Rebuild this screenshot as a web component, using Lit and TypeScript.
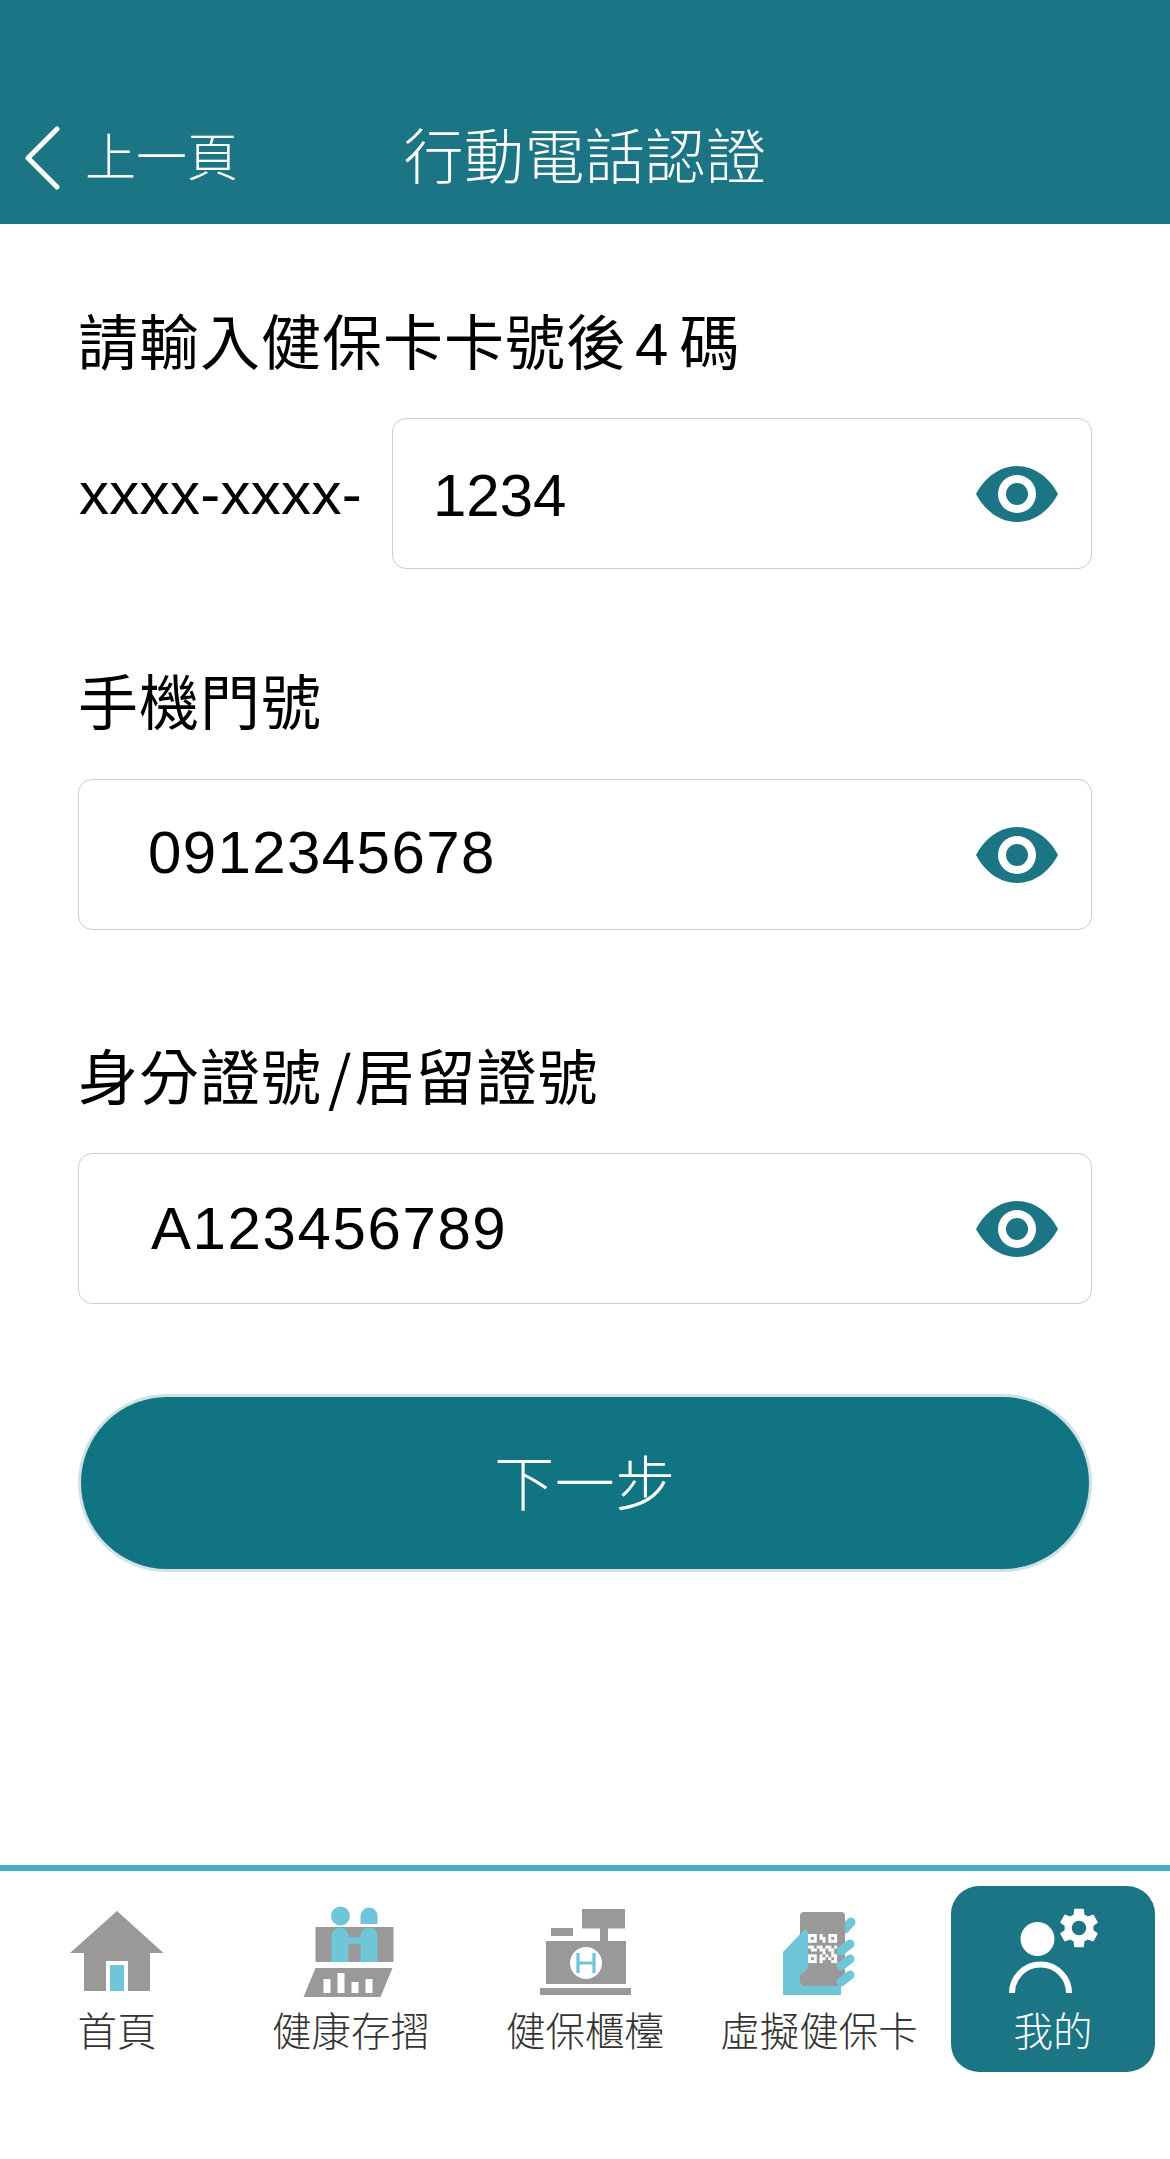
import { LitElement, html, css, svg } from "lit";
import { customElement } from "lit/decorators.js";

const GEAR = "M19.14 12.94c.04-.3.06-.61.06-.94 0-.32-.02-.64-.07-.94l2.03-1.58a.49.49 0 0 0 .12-.61l-1.92-3.32a.488.488 0 0 0-.59-.22l-2.39.96c-.5-.38-1.03-.7-1.62-.94l-.36-2.54a.484.484 0 0 0-.48-.41h-3.84c-.24 0-.43.17-.47.41l-.36 2.54c-.59.24-1.13.57-1.62.94l-2.39-.96c-.22-.08-.47 0-.59.22L2.74 8.87c-.12.21-.08.47.12.61l2.03 1.58c-.05.3-.09.63-.09.94s.02.64.07.94l-2.03 1.58a.49.49 0 0 0-.12.61l1.92 3.32c.12.22.37.29.59.22l2.39-.96c.5.38 1.03.7 1.62.94l.36 2.54c.05.24.24.41.48.41h3.84c.24 0 .44-.17.47-.41l.36-2.54c.59-.24 1.13-.56 1.62-.94l2.39.96c.22.08.47 0 .59-.22l1.92-3.32c.12-.22.07-.47-.12-.61l-2.01-1.58zM12 15.6c-1.98 0-3.6-1.62-3.6-3.6s1.62-3.6 3.6-3.6 3.6 1.62 3.6 3.6-1.62 3.6-3.6 3.6z";

const QR = [
  "1110100111",
  "1010110101",
  "1110010111",
  "0000000000",
  "1101101101",
  "0110110110",
  "0000010010",
  "1110101011",
  "1010110101",
  "1110100011",
];

const GRAY = "#999";
const BLUE = "#6ec6d8";

const homeIcon = svg`
  <path d="M117 1911 L163.5 1953 H150 V1991 H84 V1953 H70 Z" fill=${GRAY} />
  <rect x="106" y="1961" width="22" height="30" fill="#fff" />
  <rect x="110" y="1965" width="14" height="26" fill=${BLUE} />`;

const healthIcon = svg`
  <circle cx="339.5" cy="1916" r="9.5" fill=${BLUE} />
  <path d="M359.5 1924 V1916 a8.5 8.5 0 0 1 17 0 V1924 Z" fill=${BLUE} />
  <rect x="314.5" y="1927" width="78" height="35" fill=${GRAY} />
  <path d="M330.5 1962 V1936 a8.5 8.5 0 0 1 17 0 V1937 H359.5 V1936 a8.5 8.5 0 0 1 17 0 V1962 H359.5 V1944 H347.5 V1962 Z" fill=${BLUE} />
  <path d="M314.5 1968 H391.5 L379.5 1997 H302.5 Z" fill=${GRAY} />
  <rect x="322.5" y="1979" width="7" height="14" fill="#fff" />
  <rect x="336.5" y="1973" width="7" height="20" fill="#fff" />
  <rect x="350.5" y="1982" width="7" height="11" fill="#fff" />
  <rect x="364.5" y="1979" width="7" height="14" fill="#fff" />`;

const registerIcon = svg`
  <rect x="582" y="1909" width="43" height="19.5" fill=${GRAY} />
  <rect x="551" y="1928" width="22" height="8" fill=${GRAY} />
  <rect x="600" y="1928" width="8" height="14" fill=${GRAY} />
  <rect x="546" y="1941" width="80" height="43" fill=${GRAY} />
  <rect x="540" y="1988" width="91" height="7" fill=${GRAY} />
  <circle cx="586" cy="1963" r="16" fill="#fff" />
  <path d="M578 1953 V1973 M594 1953 V1973 M578 1963 H594" stroke=${BLUE} stroke-width="3.2" fill="none" />`;

const cardIcon = svg`
  <path d="M845 1929 L851 1922" stroke=${BLUE} stroke-width="9" stroke-linecap="round" />
  <rect x="800" y="1912" width="45" height="74" rx="4" fill=${GRAY} />
  <path d="M805 1929 L783 1952 V1995 H841 V1986 H804 Q800 1986 800 1982 V1975 Q807 1972 808 1966 V1932 Z" fill=${BLUE} />
  ${[[841, 1951, 850, 1944], [841, 1966, 850, 1959], [841, 1982, 850, 1975]].map(
    ([a, b, c, d]) => svg`<path d="M${a} ${b} L${c} ${d}" stroke=${BLUE} stroke-width="9" stroke-linecap="round" />`
  )}
  ${QR.flatMap((row, r) =>
    [...row].map((v, c) =>
      v === "1" ? svg`<rect x=${808 + c * 2.9} y=${1934 + r * 2.9} width="3" height="3" fill="#fff" />` : null
    )
  )}`;

const meIcon = svg`
  <circle cx="1037.5" cy="1939" r="17" fill="#fff" />
  <path d="M1012 1993 a28 28 0 0 1 57 0" stroke="#fff" stroke-width="6" fill="none" />
  <path transform="translate(1055 1904) scale(2)" d=${GEAR} fill="#fff" />`;

const NAV = [
  { label: "首頁", cx: 117, icon: homeIcon },
  { label: "健康存摺", cx: 350, icon: healthIcon },
  { label: "健保櫃檯", cx: 585, icon: registerIcon },
  { label: "虛擬健保卡", cx: 819, icon: cardIcon },
  { label: "我的", cx: 1053, icon: meIcon, active: true },
];

@customElement("app-root")
export class AppRoot extends LitElement {
  static styles = css`
    :host {
      display: flex;
      flex-direction: column;
      width: 1170px;
      min-height: 2159px;
      background: #fff;
      font-family: "Liberation Sans", "Noto Sans CJK TC", sans-serif;
      color: #000;
    }
    .header {
      box-sizing: border-box;
      height: 224px;
      background: #1b7584;
      color: #fff;
      display: grid;
      grid-template-columns: 1fr auto 1fr;
      align-items: center;
      padding-top: 84px;
    }
    .back {
      display: flex;
      align-items: center;
      gap: 25px;
      padding-left: 24px;
      font-size: 51px;
      font-weight: 300;
    }
    .back svg { display: block; margin-top: 8px; }
    .title { font-size: 60px; font-weight: 300; letter-spacing: 0.5px; padding-bottom: 4px; }
    .main {
      flex: 1;
      display: flex;
      flex-direction: column;
      padding: 0 78px;
    }
    .label {
      font-size: 60px;
      line-height: 80px;
      font-weight: 400;
      letter-spacing: 1px;
    }
    .label .four { margin: 0 10px 0 8px; }
    .label .slash {
      margin: 0 2px 0 6px;
      font-family: "Noto Sans CJK TC", sans-serif;
    }
    .first { margin-top: 81px; }
    .second { margin-top: 96px; }
    .third { margin-top: 104px; }
    .row {
      display: flex;
      align-items: center;
    }
    .row-a { margin-top: 33px; }
    .row-b { margin-top: 34px; }
    .row-c { margin-top: 33px; }
    .prefix {
      font-size: 60px;
      width: 314px;
      padding-left: 1px;
      box-sizing: border-box;
      flex: none;
      letter-spacing: 0.3px;
    }
    .field {
      flex: 1;
      min-width: 0;
      box-sizing: border-box;
      height: 151px;
      border: 1px solid #ccc;
      border-radius: 14px;
      display: flex;
      align-items: center;
      padding-right: 33px;
    }
    .field input {
      flex: 1;
      width: 100%;
      min-width: 0;
      border: none;
      outline: none;
      background: none;
      font-family: inherit;
      font-size: 60px;
      color: #000;
      padding: 0;
    }
    .short input { padding: 3px 0 0 40px; }
    .phone input { padding: 0 0 4px 69px; letter-spacing: 1.4px; }
    .idno input { padding-left: 72px; letter-spacing: 1.6px; }
    .eye { display: block; flex: none; }
    .submit {
      margin-top: 90px;
      height: 178px;
      border: 3px solid #d0e0e3;
      border-radius: 89px;
      background: #107482;
      color: #fff;
      font-family: inherit;
      font-size: 60px;
      font-weight: 300;
      letter-spacing: 0.5px;
      padding: 0 0 8px;
    }
    .nav {
      border-top: 6px solid #42b0c5;
      display: grid;
      grid-template-columns: repeat(5, 234px);
      justify-items: center;
      padding: 15px 0 87px;
    }
    .item {
      box-sizing: border-box;
      width: 204px;
      height: 186px;
      border-radius: 28px;
      display: flex;
      flex-direction: column;
      align-items: center;
      padding-top: 19px;
      color: #333;
      font-size: 39.5px;
    }
    .item svg { display: block; flex: none; }
    .item span { margin-top: 10px; line-height: 50px; white-space: nowrap; font-weight: 300; }
    .active { background: #1b7584; color: #fff; }
  `;

  private eye() {
    return html`<svg class="eye" width="82" height="56" viewBox="0 0 82 56">
      <path d="M0 28 C9 11 24 0 41 0 S73 11 82 28 C73 45 58 56 41 56 S9 45 0 28 Z" fill="#1b7584" />
      <circle cx="41" cy="28" r="19" fill="#fff" />
      <circle cx="41" cy="28" r="11" fill="#1b7584" />
    </svg>`;
  }

  render() {
    return html`
      <header class="header">
        <div class="back">
          <svg width="36" height="64" viewBox="0 0 36 64">
            <path d="M33 3 L4 32 L33 61" stroke="#fff" stroke-width="5" stroke-linecap="round" stroke-linejoin="round" fill="none" />
          </svg>
          <span>上一頁</span>
        </div>
        <div class="title">行動電話認證</div>
        <div></div>
      </header>
      <main class="main">
        <div class="label first">請輸入健保卡卡號後<span class="four">4</span>碼</div>
        <div class="row row-a">
          <span class="prefix">xxxx-xxxx-</span>
          <div class="field short"><input .value=${"1234"} aria-label="健保卡卡號後4碼" />${this.eye()}</div>
        </div>
        <div class="label second">手機門號</div>
        <div class="row row-b">
          <div class="field phone"><input .value=${"0912345678"} aria-label="手機門號" />${this.eye()}</div>
        </div>
        <div class="label third">身分證號<span class="slash">/</span>居留證號</div>
        <div class="row row-c">
          <div class="field idno"><input .value=${"A123456789"} aria-label="身分證號/居留證號" />${this.eye()}</div>
        </div>
        <button class="submit">下一步</button>
      </main>
      <nav class="nav">
        ${NAV.map(
          (n) => html`<div class="item ${n.active ? "active" : ""}">
            <svg width="120" height="92" viewBox="${n.cx - 60} 1905 120 92">${n.icon}</svg>
            <span>${n.label}</span>
          </div>`
        )}
      </nav>
    `;
  }
}
